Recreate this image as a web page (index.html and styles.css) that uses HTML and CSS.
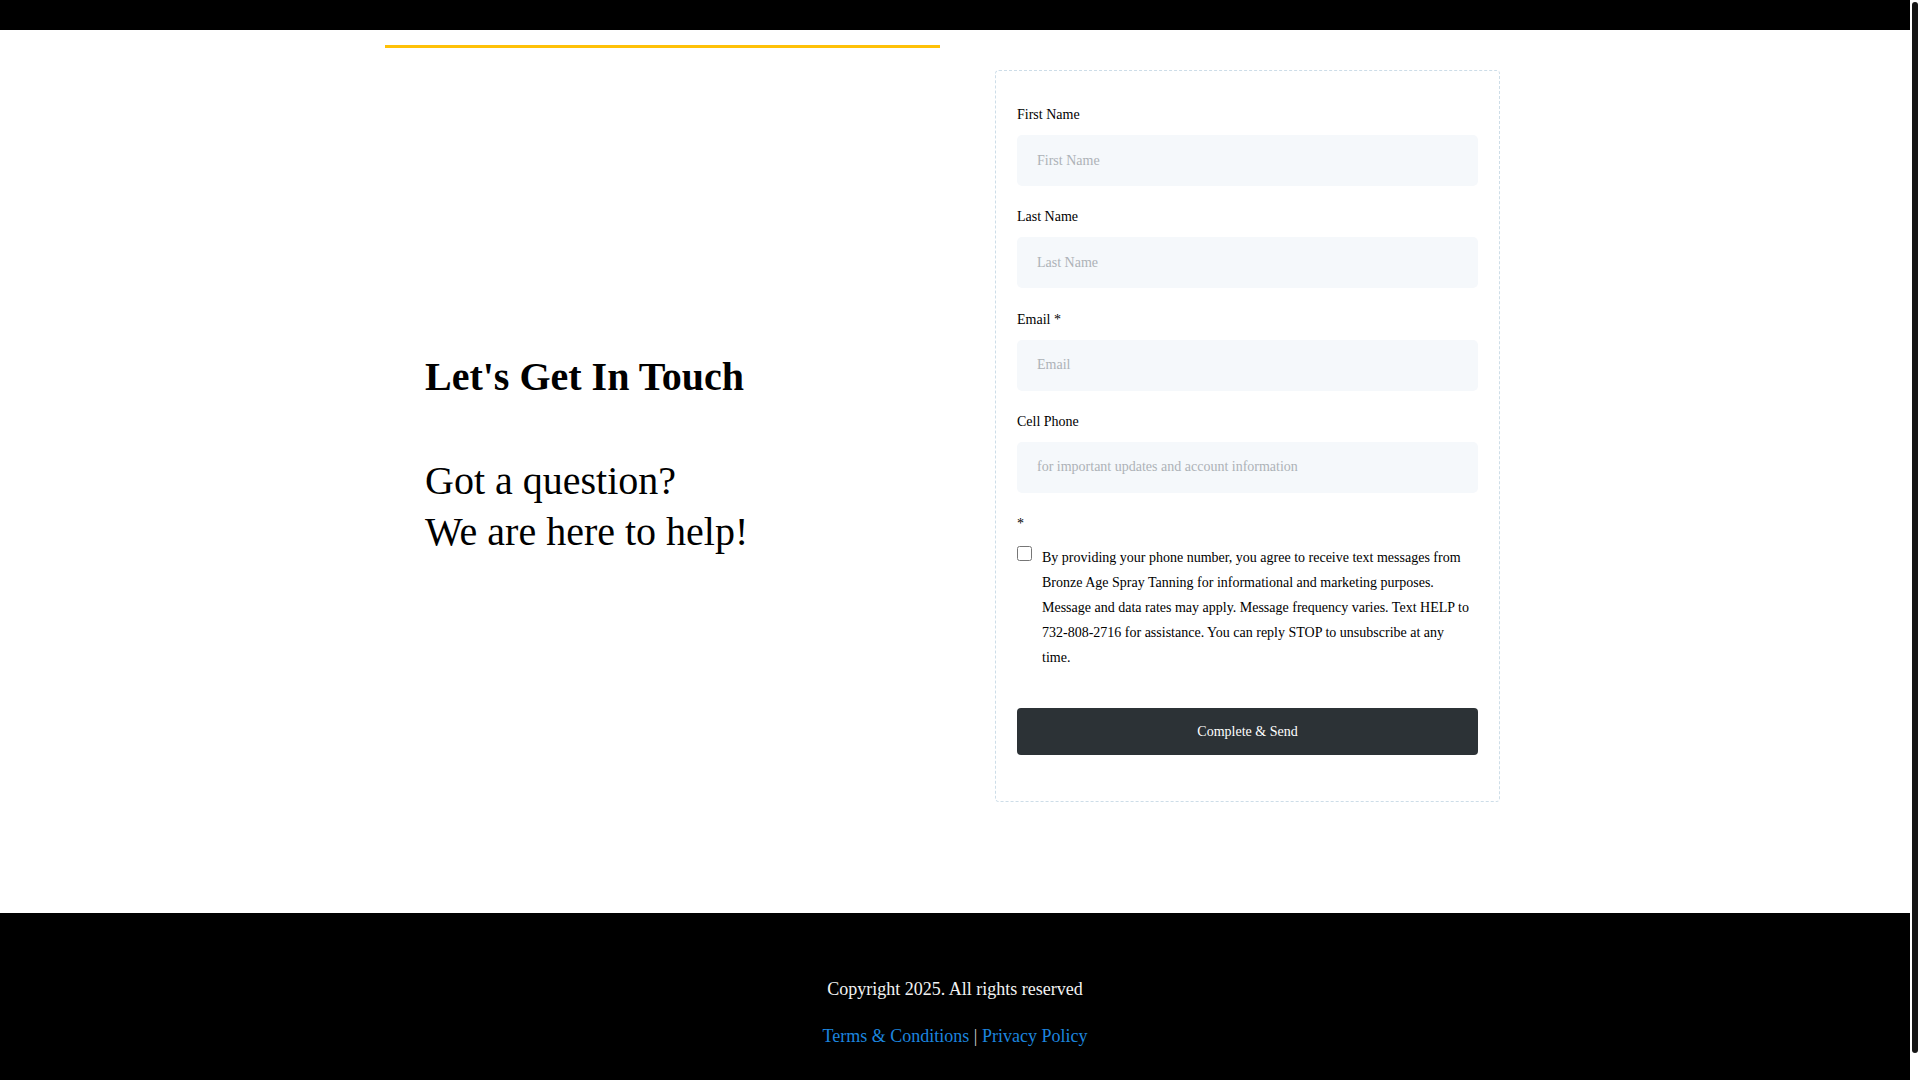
FILE: index.html
```html
<!DOCTYPE html>
<html lang="en">
<head>
<meta charset="utf-8">
<title>Contact</title>
<link rel="stylesheet" href="styles.css">
</head>
<body>
<header class="topbar"></header>
<main class="contact">
  <section class="intro">
    <h1 class="intro-title">Let's Get In Touch</h1>
    <p class="intro-text">Got a question?<br>We are here to help!</p>
  </section>
  <form class="contact-form">
    <div class="field">
      <label class="field-label" for="fn">First Name</label>
      <input class="field-input" id="fn" type="text" placeholder="First Name">
    </div>
    <div class="field">
      <label class="field-label" for="ln">Last Name</label>
      <input class="field-input" id="ln" type="text" placeholder="Last Name">
    </div>
    <div class="field">
      <label class="field-label" for="em">Email *</label>
      <input class="field-input" id="em" type="email" placeholder="Email">
    </div>
    <div class="field">
      <label class="field-label" for="ph">Cell Phone</label>
      <input class="field-input" id="ph" type="tel" placeholder="for important updates and account information">
    </div>
    <div class="field-label star">*</div>
    <label class="consent">
      <input class="consent-box" type="checkbox">
      <span class="consent-text">By providing your phone number, you agree to receive text messages from Bronze Age Spray Tanning for informational and marketing purposes. Message and data rates may apply. Message frequency varies. Text HELP to 732-808-2716 for assistance. You can reply STOP to unsubscribe at any time.</span>
    </label>
    <button class="submit" type="button">Complete &amp; Send</button>
  </form>
</main>
<footer class="footer">
  <p class="copyright">Copyright 2025. All rights reserved</p>
  <p class="legal"><a class="legal-link" href="#">Terms &amp; Conditions</a> <span class="sep">|</span> <a class="legal-link" href="#">Privacy Policy</a></p>
</footer>
<div class="scrollbar" aria-hidden="true"><div class="scrollbar-thumb"></div></div>
</body>
</html>
```

FILE: styles.css
```css
html {
  background: #ffffff;
}
body {
  margin: 0 10px 0 0;
  font-family: "Liberation Serif", "Times New Roman", serif;
  color: #000000;
}
.topbar {
  height: 30px;
  background: #000000;
}
.contact {
  width: 1140px;
  margin: 0 auto;
  padding: 15px 0 111px;
  display: grid;
  grid-template-columns: 555px 505px;
  column-gap: 55px;
  align-items: start;
}
.intro {
  border-top: 3px solid #ffc107;
  padding: 305px 0 0 40px;
}
.intro-title {
  margin: 0;
  font-size: 40px;
  line-height: 48px;
  font-weight: 700;
}
.intro-text {
  margin: 54px 0 0;
  font-size: 40px;
  line-height: 51px;
}
.contact-form {
  margin-top: 25px;
  border: 1px dashed #cddde8;
  border-radius: 4px;
  padding: 34px 21px 46px;
}
.field {
  margin-bottom: 21.33px;
}
.field-label {
  display: block;
  font-size: 14px;
  line-height: 20px;
  margin-bottom: 10px;
}
.star {
  margin-bottom: 11px;
}
.field-input {
  display: block;
  width: 100%;
  box-sizing: border-box;
  height: 51px;
  border: none;
  border-radius: 5px;
  background: #f5f8fb;
  padding: 0 20px;
  font-family: "Liberation Serif", "Times New Roman", serif;
  font-size: 14px;
  color: #222;
  outline: none;
}
.field-input::placeholder {
  color: #adb2b7;
}
.consent {
  display: flex;
  align-items: flex-start;
  gap: 10px;
}
.consent-box {
  width: 15px;
  height: 15px;
  margin: 1px 0 0;
  flex: none;
}
.consent-text {
  max-width: 430px;
  font-size: 14px;
  line-height: 25px;
}
.submit {
  display: block;
  width: 100%;
  height: 47px;
  margin-top: 38px;
  border: none;
  border-radius: 4px;
  background: #2c3236;
  color: #ffffff;
  font-family: "Liberation Serif", "Times New Roman", serif;
  font-size: 14px;
}
.footer {
  background: #000000;
  text-align: center;
  padding: 63px 0 61px;
}
.copyright {
  margin: 0;
  font-size: 18px;
  line-height: 26px;
  color: #f2f2f2;
}
.legal {
  margin: 21px 0 0;
  font-size: 18px;
  line-height: 26px;
  color: #cccccc;
}
.legal-link {
  color: #1c84de;
  text-decoration: none;
}
.sep {
  color: #cfcfcf;
}
.scrollbar {
  position: fixed;
  top: 0;
  right: 0;
  width: 10px;
  height: 100vh;
  background: #ffffff;
  box-sizing: border-box;
  padding: 2px 2px 0;
}
.scrollbar-thumb {
  height: 1051px;
  background: #151515;
  border-radius: 3px;
}
```
